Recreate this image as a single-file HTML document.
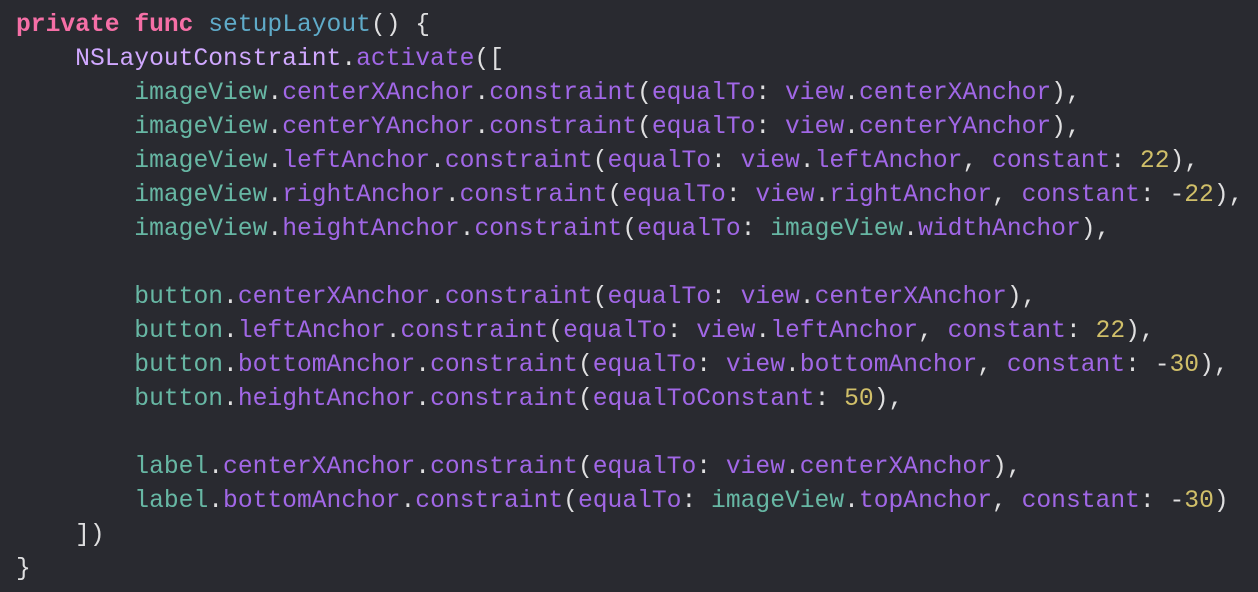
<!DOCTYPE html>
<html><head><meta charset="utf-8"><style>
html,body{margin:0;padding:0;background:#292a30;width:1258px;height:592px;overflow:hidden}
pre{margin:0;padding:8px 0 0 16px;font-family:"Liberation Mono",monospace;font-size:24.65px;line-height:34px;color:#dfdfe0}
.k{color:#f56fa6;font-weight:bold}.f{color:#5fabc9}.t{color:#d0a8ff}.m{color:#a167e6}.v{color:#67b7a4}.n{color:#d0bf69}
</style></head><body><pre><span class="k">private</span> <span class="k">func</span> <span class="f">setupLayout</span>() {
    <span class="t">NSLayoutConstraint</span>.<span class="m">activate</span>([
        <span class="v">imageView</span>.<span class="m">centerXAnchor</span>.<span class="m">constraint</span>(<span class="m">equalTo</span>: <span class="m">view</span>.<span class="m">centerXAnchor</span>),
        <span class="v">imageView</span>.<span class="m">centerYAnchor</span>.<span class="m">constraint</span>(<span class="m">equalTo</span>: <span class="m">view</span>.<span class="m">centerYAnchor</span>),
        <span class="v">imageView</span>.<span class="m">leftAnchor</span>.<span class="m">constraint</span>(<span class="m">equalTo</span>: <span class="m">view</span>.<span class="m">leftAnchor</span>, <span class="m">constant</span>: <span class="n">22</span>),
        <span class="v">imageView</span>.<span class="m">rightAnchor</span>.<span class="m">constraint</span>(<span class="m">equalTo</span>: <span class="m">view</span>.<span class="m">rightAnchor</span>, <span class="m">constant</span>: -<span class="n">22</span>),
        <span class="v">imageView</span>.<span class="m">heightAnchor</span>.<span class="m">constraint</span>(<span class="m">equalTo</span>: <span class="v">imageView</span>.<span class="m">widthAnchor</span>),

        <span class="v">button</span>.<span class="m">centerXAnchor</span>.<span class="m">constraint</span>(<span class="m">equalTo</span>: <span class="m">view</span>.<span class="m">centerXAnchor</span>),
        <span class="v">button</span>.<span class="m">leftAnchor</span>.<span class="m">constraint</span>(<span class="m">equalTo</span>: <span class="m">view</span>.<span class="m">leftAnchor</span>, <span class="m">constant</span>: <span class="n">22</span>),
        <span class="v">button</span>.<span class="m">bottomAnchor</span>.<span class="m">constraint</span>(<span class="m">equalTo</span>: <span class="m">view</span>.<span class="m">bottomAnchor</span>, <span class="m">constant</span>: -<span class="n">30</span>),
        <span class="v">button</span>.<span class="m">heightAnchor</span>.<span class="m">constraint</span>(<span class="m">equalToConstant</span>: <span class="n">50</span>),

        <span class="v">label</span>.<span class="m">centerXAnchor</span>.<span class="m">constraint</span>(<span class="m">equalTo</span>: <span class="m">view</span>.<span class="m">centerXAnchor</span>),
        <span class="v">label</span>.<span class="m">bottomAnchor</span>.<span class="m">constraint</span>(<span class="m">equalTo</span>: <span class="v">imageView</span>.<span class="m">topAnchor</span>, <span class="m">constant</span>: -<span class="n">30</span>)
    ])
}</pre></body></html>
